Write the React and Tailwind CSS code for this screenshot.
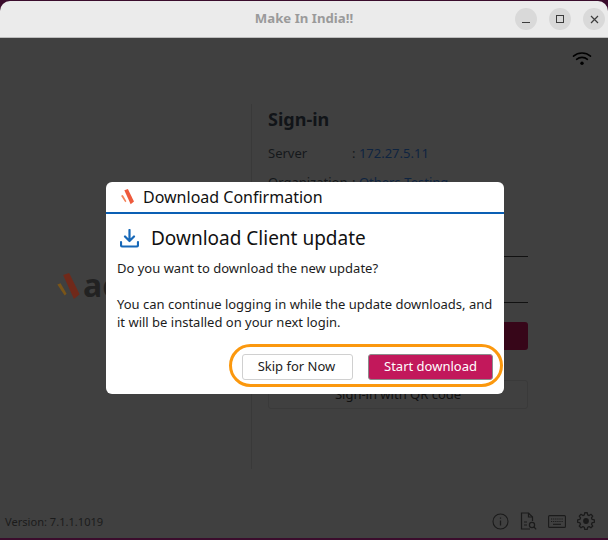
import React from "react";

const Wifi = () => (
  <svg width="20" height="16" viewBox="0 0 20 16" fill="none" stroke="#000" strokeWidth="1.6" strokeLinecap="round">
    <path d="M1.500 5.200C6.200.9 13.800.9 18.500 5.200" />
    <path d="M4.600 8.300C7.600 5.700 12.400 5.700 15.400 8.300" />
    <circle cx="10" cy="12.300" r="1.700" fill="#000" stroke="none" />
  </svg>
);

const Mark = ({ w = 14, h = 17, dim = false }) => (
  <svg width={w} height={h} viewBox="0 0 14 17">
    <path d="M3.600 1.200 L7.400 0 L14 13.400 L10.400 16.400 Z" fill={dim ? "#70291a" : "#ee5a3c"} />
    <path d="M0 7.200 L2 6.400 L5.800 13 L4.600 14.200 Z" fill={dim ? "#7a5518" : "#f4845a"} />
  </svg>
);

const FootIcons = () => (
  <div className="flex items-center gap-[11px] text-[#1b1b1b] -mt-[3px]">
    <svg width="17" height="17" viewBox="0 0 17 17" fill="none" stroke="currentColor" strokeWidth="1.1">
      <circle cx="8.500" cy="8.500" r="7.500" />
      <path d="M8.500 7.500v5M8.500 4.400v1.300" strokeWidth="1.300" />
    </svg>
    <svg width="17" height="19" viewBox="0 0 17 19" fill="none" stroke="currentColor" strokeWidth="1.200">
      <path d="M10 17H1.500V1h7l4 4v4" />
      <path d="M8.500 1v4h4M4 10h3M4 13h3" />
      <circle cx="12" cy="13" r="2.600" />
      <path d="M14 15l2.200 2.400" />
    </svg>
    <svg width="18" height="13" viewBox="0 0 18 13" fill="none" stroke="currentColor" strokeWidth="1.100">
      <rect x="0.600" y="0.600" width="16.800" height="11.800" rx="1" />
      <path d="M3 4h12M3 6.500h12" strokeDasharray="1.200 0.900" />
      <path d="M5 9.300h8" />
    </svg>
    <svg width="18" height="18" viewBox="0 0 24 24" fill="none" stroke="currentColor" strokeWidth="1.700" strokeLinejoin="round">
      <path d="M10.300 2h3.400l.5 2.900 2 .9 2.400-1.700 2.400 2.400-1.700 2.400.9 2 2.900.5v3.400l-2.900.5-.9 2 1.700 2.400-2.400 2.400-2.400-1.700-2 .9-.5 2.900h-3.400l-.5-2.900-2-.9-2.400 1.700-2.400-2.400 1.700-2.400-.9-2-2.900-.5v-3.400l2.900-.5.9-2-1.700-2.400 2.400-2.400 2.400 1.700 2-.9z" transform="translate(0 -1)" />
      <circle cx="12" cy="12" r="3" fill="currentColor" />
    </svg>
  </div>
);

export default function App() {
  return (
    <div className="w-[608px] h-[540px] bg-[#3a0c2c] pt-px flex flex-col overflow-hidden font-['Noto_Sans',sans-serif] relative">
      <header className="h-[37px] shrink-0 bg-[#ebebeb] border-b border-[#bdbdbd] rounded-t-[10px] flex items-center justify-center relative">
        <span className="text-[13.2px] font-bold text-[#9a9a9a]">Make In India!!</span>
        <div className="absolute right-[3px] top-[7px] flex gap-3">
          <div className="w-[22px] h-[22px] rounded-full bg-[#d9d9d9] flex items-center justify-center">
            <div className="w-2 h-px bg-[#3d3d3d] mt-[7px]"></div>
          </div>
          <div className="w-[22px] h-[22px] rounded-full bg-[#d9d9d9] flex items-center justify-center">
            <div className="w-2 h-2 border border-[#3d3d3d]"></div>
          </div>
          <div className="w-[22px] h-[22px] rounded-full bg-[#d9d9d9] flex items-center justify-center">
            <svg width="9" height="9" viewBox="0 0 9 9" stroke="#3d3d3d" strokeWidth="1.200"><path d="M1 1l7 7M8 1l-7 7" /></svg>
          </div>
        </div>
      </header>

      <main className="flex-1 bg-[#404040] relative flex flex-col">
        <div className="flex justify-end pt-[13px] pr-4"><Wifi /></div>
        <div className="flex-1 flex mt-[37px]">
          <div className="w-[251px] shrink-0 flex items-start pt-[169px] pl-[57px]">
            <div className="flex items-start gap-[3px]">
              <Mark w={23} h={27} dim />
              <span className="text-[32px] leading-[24px] font-bold text-[#222222]">ac</span>
            </div>
          </div>
          <div className="w-[277px] border-l border-[#393939] pl-4 h-[365px]">
            <h1 className="text-[18px] leading-[28px] font-bold text-[#111418] mt-[1px]">Sign-in</h1>
            <div className="flex text-[13px] leading-[18px] mt-[11px] text-[#15181b]">
              <span className="w-[84px]">Server</span>
              <span>: <span className="text-[#0f2440]">172.27.5.11</span></span>
            </div>
            <div className="flex text-[13px] leading-[18px] mt-[11px] text-[#15181b]">
              <span className="w-[84px]">Organization</span>
              <span>: <span className="text-[#0f2440]">Others-Testing</span></span>
            </div>
            <div className="h-px bg-[#111111] mt-[65px]"></div>
            <div className="h-px bg-[#111111] mt-[45px]"></div>
            <div className="h-[28px] mt-[19px] rounded-[3px] bg-[#370619]"></div>
            <div className="h-[29px] mt-[30px] rounded-[3px] border border-[#3a3a3a] flex items-center justify-center text-[13px] text-[#111111]">Sign-in with QR code</div>
          </div>
        </div>
        <footer className="h-[37px] pt-[6px] flex items-center justify-between pl-[5px] pr-[13px]">
          <span className="text-[11.1px] text-[#1b1b1b]">Version: 7.1.1.1019</span>
          <FootIcons />
        </footer>
      </main>
      <div className="h-[2px] shrink-0"></div>

      <div className="absolute left-[106px] top-[182px] w-[398px] h-[212px] bg-white rounded-[6px] flex flex-col">
        <div className="h-[32px] shrink-0 border-b-2 border-[#0a5fb4] flex items-center pl-[15px] gap-[9px]">
          <Mark w={13} h={16} />
          <span className="text-[16px] text-[#111111]">Download Confirmation</span>
        </div>
        <div className="pl-[11px] pr-2">
          <div className="flex items-center gap-[12px] mt-[9px] pl-[3px]">
            <svg width="19" height="19" viewBox="0 0 19 19" fill="none" stroke="#1768b8" strokeWidth="2.200" strokeLinecap="round" strokeLinejoin="round">
              <path d="M9.500 1v10.500M5 7.500l4.500 4.500L14 7.500" />
              <path d="M1 13V16a1.500 1.500 0 0 0 1.500 1.500h14A1.500 1.500 0 0 0 18 16v-3" />
            </svg>
            <h2 className="text-[19px] leading-[30px] text-[#111111]">Download Client update</h2>
          </div>
          <div className="text-[13px] leading-[18px] text-[#1c1c1c] mt-[6px] whitespace-nowrap">
            <p>Do you want to download the new update?</p>
            <p className="mt-[18px]">You can continue logging in while the update downloads, and</p>
            <p>it will be installed on your next login.</p>
          </div>
        </div>
        <div className="absolute right-[11px] bottom-[14px] flex gap-[15px]">
          <button className="w-[111px] h-[26px] pr-[2px] rounded-[3px] border border-[#d0d0d0] bg-white text-[13px] text-[#222222]">Skip for Now</button>
          <button className="w-[125px] h-[26px] rounded-[3px] border border-[#8c8c8c] bg-[#c2185b] text-[13px] text-white">Start download</button>
        </div>
      </div>

      <div className="absolute left-[229px] top-[344px] w-[274px] h-[43px] rounded-full border-[3px] border-[#fb980e]"></div>
    </div>
  );
}
